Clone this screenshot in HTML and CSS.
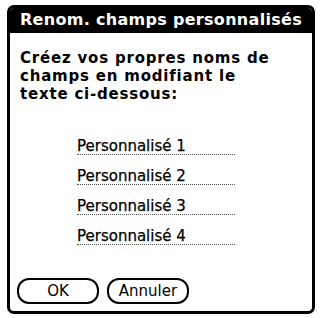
FILE: index.html
```html
<!DOCTYPE html>
<html lang="fr">
<head>
<meta charset="utf-8">
<link rel="stylesheet" href="styles.css">
</head>
<body>
<div class="dialog">
  <div class="title">Renom. champs personnalisés</div>
  <div class="content">
    <p class="intro">Créez vos propres noms de champs en modifiant le texte ci-dessous:</p>
    <div class="fields">
      <div class="field">Personnalisé 1</div>
      <div class="field">Personnalisé 2</div>
      <div class="field">Personnalisé 3</div>
      <div class="field">Personnalisé 4</div>
    </div>
    <div class="buttons">
      <button class="btn btn-ok">OK</button>
      <button class="btn btn-cancel">Annuler</button>
    </div>
  </div>
</div>
</body>
</html>
```
FILE: styles.css
```css
html, body {
  margin: 0;
  padding: 0;
  background: #fff;
}
body {
  width: 320px;
  height: 318px;
  overflow: hidden;
  font-family: "DejaVu Sans", "Liberation Sans", sans-serif;
  color: #000;
}
.dialog {
  box-sizing: border-box;
  margin: 5px 0 0 7px;
  width: 308px;
  height: 309px;
  border: 3px solid #000;
  border-radius: 7px;
  display: flex;
  flex-direction: column;
  overflow: hidden;
}
.title {
  background: #000;
  color: #fff;
  font-weight: bold;
  font-size: 16px;
  height: 25px;
  line-height: 24px;
  text-align: center;
  letter-spacing: 0.3px;
}
.content {
  flex: 1;
  display: flex;
  flex-direction: column;
  padding: 0 7px;
}
.intro {
  margin: 16px 0 0 3px;
  max-width: 262px;
  font-weight: bold;
  font-size: 15px;
  letter-spacing: 0.8px;
  line-height: 18px;
}
.fields {
  margin: 31px 0 0 60px;
  display: flex;
  flex-direction: column;
  gap: 9px;
}
.field {
  width: 158px;
  font-size: 15px;
  line-height: 25px;
  height: 21px;
  overflow: visible;
  border-bottom: 1px dotted #555;
  box-sizing: border-box;
  -webkit-text-stroke: 0.25px #000;
}
.buttons {
  margin-top: auto;
  margin-bottom: 7px;
  display: flex;
  gap: 8px;
}
.btn {
  width: 82px;
  height: 26px;
  border: 2px solid #000;
  border-radius: 12px;
  background: #fff;
  font-family: inherit;
  font-size: 15px;
  color: #000;
  padding: 0;
}
```
